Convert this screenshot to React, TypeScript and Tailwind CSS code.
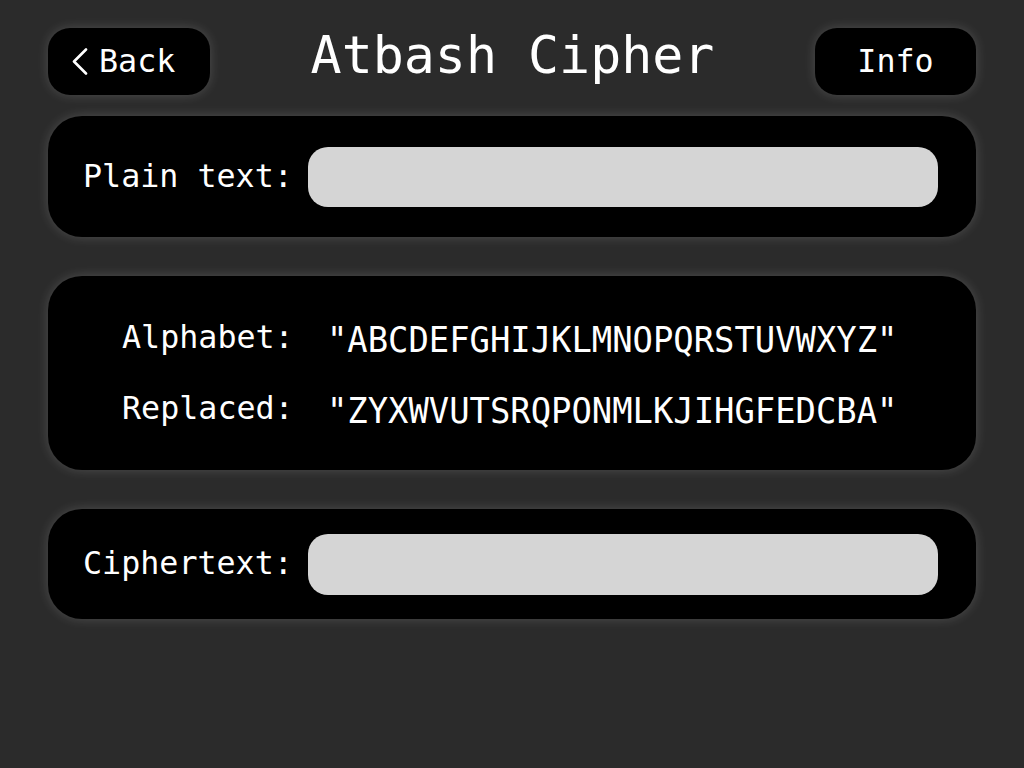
import React from "react";

const mono = "font-['DejaVu_Sans_Mono','Liberation_Mono',monospace]";

export default function App() {
  return (
    <div className={`min-h-screen w-full bg-[#2b2b2b] text-white ${mono}`}>
      <div className="px-[48px] pt-[28px]">
        {/* Header */}
        <div className="flex items-center">
          <div className="flex h-[67px] w-[162px] items-center rounded-[22px] bg-black pl-[24px] shadow-[0_0_12px_rgba(255,255,255,0.17)]">
            <svg width="16" height="27" viewBox="0 0 16 27" className="shrink-0">
              <path d="M14 1.5 L2 13.5 L14 25.5" fill="none" stroke="white" strokeWidth="2.6" strokeLinecap="round" strokeLinejoin="round" />
            </svg>
            <span className="ml-[11px] text-[31.7px] leading-none">Back</span>
          </div>
          <div className="flex flex-1 justify-center pb-[12px] text-[51.6px] leading-none">Atbash Cipher</div>
          <div className="flex h-[67px] w-[161px] items-center justify-center rounded-[22px] bg-black text-[31.7px] leading-none shadow-[0_0_12px_rgba(255,255,255,0.17)]">
            Info
          </div>
        </div>

        {/* Plain text card */}
        <div className="mt-[21px] flex h-[121px] items-center rounded-[34px] bg-black pl-[35px] pr-[38px] shadow-[0_0_12px_rgba(255,255,255,0.17)]">
          <span className="text-[31.7px] leading-none whitespace-pre">Plain text:</span>
          <div className="ml-[15px] h-[60px] flex-1 rounded-[20px] bg-[#d5d5d5]" />
        </div>

        {/* Alphabet card */}
        <div className="mt-[39px] flex h-[194px] flex-col justify-center rounded-[34px] bg-black pl-[74px] shadow-[0_0_12px_rgba(255,255,255,0.17)]">
          <div className="flex h-[71px] items-center">
            <span className="w-[172px] text-[31.7px] leading-none">Alphabet:</span>
            <span className="ml-[33px] inline-block origin-left scale-x-[0.94] pt-[4px] text-[36px] leading-none whitespace-pre">"ABCDEFGHIJKLMNOPQRSTUVWXYZ"</span>
          </div>
          <div className="flex h-[71px] items-center">
            <span className="w-[172px] text-[31.7px] leading-none">Replaced:</span>
            <span className="ml-[33px] inline-block origin-left scale-x-[0.94] pt-[4px] text-[36px] leading-none whitespace-pre">"ZYXWVUTSRQPONMLKJIHGFEDCBA"</span>
          </div>
        </div>

        {/* Ciphertext card */}
        <div className="mt-[39px] flex h-[110px] items-center rounded-[34px] bg-black pl-[35px] pr-[38px] shadow-[0_0_12px_rgba(255,255,255,0.17)]">
          <span className="text-[31.7px] leading-none whitespace-pre">Ciphertext:</span>
          <div className="ml-[15px] h-[61px] flex-1 rounded-[20px] bg-[#d5d5d5]" />
        </div>
      </div>
    </div>
  );
}
